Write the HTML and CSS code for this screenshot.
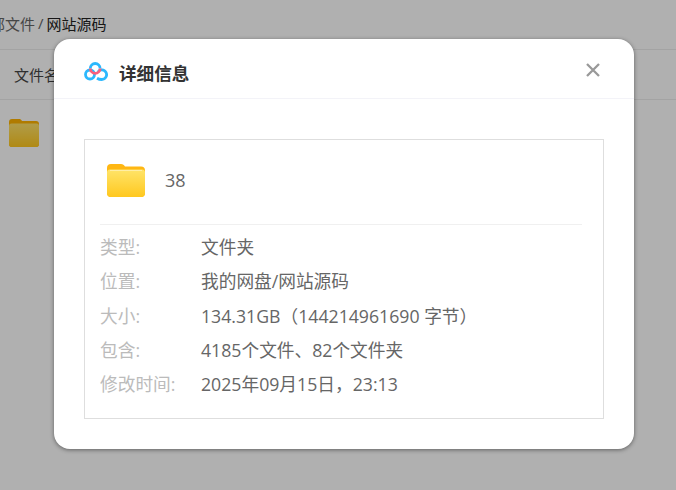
FILE: index.html
```html
<!DOCTYPE html>
<html lang="zh-CN">
<head>
<meta charset="utf-8">
<title>详细信息</title>
<link rel="stylesheet" href="styles.css">
</head>
<body>
<div class="page">
  <div class="crumbs"><span class="crumb-all">全部文件</span><span class="sep">/</span><span class="crumb-now">网站源码</span></div>
  <div class="thead">文件名</div>
  <div class="row">
    <svg class="list-folder" viewBox="0 0 30 28" width="30" height="28"><defs><linearGradient id="lf" x1="0" y1="0" x2="0" y2="1"><stop offset="0" stop-color="#ffe26a"/><stop offset="1" stop-color="#ffc81e"/></linearGradient></defs><path d="M0 3a3 3 0 0 1 3-3h7c1.500 0 2 .6 3 2h14a3 3 0 0 1 3 3v20a3 3 0 0 1-3 3H3a3 3 0 0 1-3-3z" fill="#ffb300"/><path d="M0 7a2.500 2.500 0 0 1 2.500-2.500h25A2.500 2.500 0 0 1 30 7v18a3 3 0 0 1-3 3H3a3 3 0 0 1-3-3z" fill="url(#lf)"/></svg>
  </div>
</div>
<div class="mask"></div>
<div class="dialog">
  <div class="dialog-head">
    <svg class="logo" viewBox="0 0 24 20" width="24" height="20" fill="none">
      <circle cx="6" cy="13.500" r="4.500" stroke="#2cb8fd" stroke-width="2.800"/>
      <path d="M13 17.200c2 1.200 3.500 1.300 4.800 1.300a4.800 4.800 0 1 0-4-7.500" stroke="#2cb8fd" stroke-width="2.800"/>
      <path d="M6.300 7.400a4.900 4.900 0 0 1 9.800 0" stroke="#2cb8fd" stroke-width="2.800"/>
      <path d="M16.100 7.400a4.900 4.900 0 0 1-9.800 0" stroke="#f8607c" stroke-width="2.800"/>
    </svg>
    <h2 class="dialog-title">详细信息</h2>
    <svg class="close" viewBox="0 0 16 16" width="16" height="16"><path d="M2 2l12 12M14 2L2 14" stroke="#999" stroke-width="2.300" fill="none"/></svg>
  </div>
  <div class="dialog-body">
    <div class="card">
      <div class="file-head">
        <svg class="big-folder" viewBox="0 0 38 33" width="38" height="33"><defs><linearGradient id="bf" x1="0" y1="0" x2="0" y2="1"><stop offset="0" stop-color="#ffe469"/><stop offset="1" stop-color="#ffc81f"/></linearGradient></defs><path d="M0 4a4 4 0 0 1 4-4h10c2 0 3 1 4 2.500h16a4 4 0 0 1 4 4V29a4 4 0 0 1-4 4H4a4 4 0 0 1-4-4z" fill="#ffb713"/><path d="M0 8.500a3 3 0 0 1 3-3h32a3 3 0 0 1 3 3V29a4 4 0 0 1-4 4H4a4 4 0 0 1-4-4z" fill="url(#bf)"/><path d="M3 6.500h32" stroke="#ffeea6" stroke-width="1"/></svg>
        <span class="file-name">38</span>
      </div>
      <dl class="info">
        <div class="info-row"><dt>类型:</dt><dd>文件夹</dd></div>
        <div class="info-row"><dt>位置:</dt><dd>我的网盘/网站源码</dd></div>
        <div class="info-row"><dt>大小:</dt><dd>134.31GB（144214961690 字节）</dd></div>
        <div class="info-row"><dt>包含:</dt><dd>4185个文件、82个文件夹</dd></div>
        <div class="info-row"><dt>修改时间:</dt><dd>2025年09月15日，23:13</dd></div>
      </dl>
    </div>
  </div>
</div>
</body>
</html>
```
FILE: styles.css
```css
* { box-sizing: border-box; }
html, body { margin: 0; padding: 0; }
body {
  width: 676px;
  height: 490px;
  overflow: hidden;
  position: relative;
  background: #fff;
  font-family: "Open Sans", "Noto Sans CJK SC", sans-serif;
}
.page { width: 676px; height: 490px; overflow: hidden; }
.crumbs {
  height: 50px;
  border-bottom: 1px solid #ececec;
  display: flex;
  align-items: center;
  gap: 3px;
  margin-left: -25px;
  padding-bottom: 3px;
  font-size: 15px;
  color: #666;
  white-space: nowrap;
}
.crumb-now { color: #222; }
.thead {
  height: 50px;
  border-bottom: 1px solid #ececec;
  padding-left: 14px;
  display: flex;
  align-items: center;
  font-size: 15px;
  color: #444;
}
.row { padding: 19px 0 0 9px; }
.list-folder { display: block; }
.mask {
  position: absolute;
  inset: 0;
  background: rgba(0, 0, 0, 0.31);
}
.dialog {
  position: absolute;
  left: 54px;
  top: 39px;
  width: 580px;
  height: 410px;
  background: #fff;
  border-radius: 16px;
  box-shadow: 0 1px 4px rgba(0, 0, 0, 0.45);
}
.dialog-head {
  height: 60px;
  border-bottom: 1px solid #f3f3f8;
  display: flex;
  align-items: center;
  padding: 0 32px 0 30px;
}
.logo { flex: none; margin-top: 5px; }
.dialog-title {
  flex: 1;
  margin: 7px 0 0 11px;
  font-size: 17.600px;
  font-weight: 700;
  color: #333;
}
.close { flex: none; margin-top: 3px; transform: translateX(-1px); }
.dialog-body { padding: 40px 30px 0; }
.card {
  width: 520px;
  height: 280px;
  border: 1px solid #dedede;
  padding: 0 21px 0 15px;
}
.file-head {
  height: 85px;
  border-bottom: 1px solid #f0f0f0;
  display: flex;
  align-items: center;
  padding-left: 7px;
  padding-bottom: 4px;
}
.big-folder { flex: none; }
.file-name { margin-left: 20px; font-size: 18px; color: #666; }
.info { margin: 4px 0 0; }
.info-row { display: flex; height: 34.300px; align-items: center; font-size: 17.700px; }
.info-row dt { width: 101px; color: #bbb; }
.info-row dd { margin: 0; color: #666; white-space: nowrap; }
```
